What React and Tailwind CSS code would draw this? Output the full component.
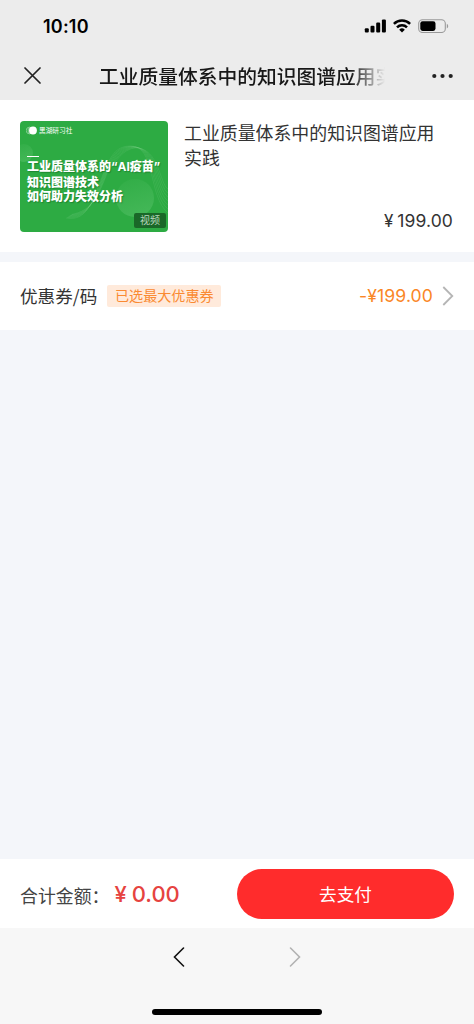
import React from 'react';

const course = {
  title: '工业质量体系中的知识图谱应用实践',
  price: '199.00',
  discount: '199.00',
  total: '0.00',
};

const waves = [0, 1, 2, 3, 4, 5, 6];

const StatusBar = () => (
  <div className="flex h-[52px] items-center justify-between pl-[43px] pr-[25px]">
    <span className="pt-[2px] font-['Inter'] text-[18px] font-semibold leading-none tracking-[0.2px] text-black">10:10</span>
    <div className="flex items-center gap-[7px]">
      <svg width="22" height="14" viewBox="0 0 22 14" fill="#000">
        <rect x="0.8" y="9.2" width="4" height="4.4" rx="1.1" />
        <rect x="6.5" y="6.8" width="4" height="6.8" rx="1.1" />
        <rect x="12.2" y="3.6" width="4" height="10" rx="1.1" />
        <rect x="17.9" y="0.4" width="4" height="13.2" rx="1.1" />
      </svg>
      <svg width="18" height="14" viewBox="0 0 18 14" fill="none" stroke="#000" strokeWidth="2.5">
        <path d="M0.9 4.8a11.6 11.6 0 0 1 16.2 0" />
        <path d="M4 8.3a7.1 7.1 0 0 1 10 0" />
        <path d="M9 13.4 6.2 10.7a4 4 0 0 1 5.6 0Z" fill="#000" stroke="none" />
      </svg>
      <svg width="31" height="14" viewBox="0 0 31 14">
        <rect x="0.7" y="0.7" width="26.6" height="12.8" rx="3.8" fill="none" stroke="#999" strokeWidth="1.1" />
        <rect x="2.3" y="2.3" width="15.2" height="9.6" rx="2.3" fill="#000" />
        <path d="M28.8 4.8c1.9.8 1.9 3.8 0 4.6Z" fill="#999" />
      </svg>
    </div>
  </div>
);

const TitleBar = () => (
  <div className="flex h-[47px] items-center pl-6 pr-[21px]">
    <svg width="17" height="17" viewBox="0 0 17 17" fill="none" stroke="#222" strokeWidth="1.7" strokeLinecap="round">
      <path d="M1 1l15 15M16 1L1 16" />
    </svg>
    <h1 className="ml-[58px] w-[286px] overflow-hidden whitespace-nowrap text-[19.75px] font-medium text-[#181818] [mask-image:linear-gradient(to_right,#000_88%,transparent)]">
      {course.title}
    </h1>
    <svg className="ml-auto" width="21" height="6" viewBox="0 0 21 6" fill="#222">
      <circle cx="2.3" cy="3" r="2.1" />
      <circle cx="10.5" cy="3" r="2.1" />
      <circle cx="18.7" cy="3" r="2.1" />
    </svg>
  </div>
);

const Cover = () => (
  <div className="relative h-[111px] w-[148px] shrink-0 overflow-hidden rounded-[4px] bg-[#2dab43] text-white">
    <svg className="absolute inset-0" width="148" height="111" viewBox="0 0 148 111" fill="none">
      <defs>
        <linearGradient id="ball" x1="0" y1="0" x2="0.3" y2="1">
          <stop offset="0" stopColor="#8ee09a" stopOpacity="0.04" />
          <stop offset="1" stopColor="#8ee09a" stopOpacity="0.22" />
        </linearGradient>
      </defs>
      <circle cx="4" cy="32" r="9" fill="url(#ball)" />
      <circle cx="115" cy="77" r="19" fill="url(#ball)" />
      {waves.map((i) => (
        <path
          key={i}
          d={`M${46 + i} ${97 - i * 0.6}C${66 + i} ${101 - i * 2} ${72 + i} ${82 - i} ${82 + i} ${56 - i}C${90 + i} ${35 + i} ${96 + i} ${25 + i * 0.5} ${110 + i} ${25 + i * 0.3}C${136 + i * 0.5} ${24 + i * 0.5} ${128 + i * 2} ${76 - i * 2} 148 ${92 - i * 4}`}
          stroke="#a4e8aa"
          strokeOpacity="0.2"
          strokeWidth="0.6"
        />
      ))}
    </svg>
    <div className="relative flex h-full flex-col pl-[6px] pt-[4px]">
      <div className="flex h-[11px] items-center gap-[2px]">
        <svg width="11" height="9" viewBox="0 0 11 9" fill="none">
          <circle cx="3.6" cy="4.5" r="3.4" stroke="#fff" strokeOpacity="0.65" strokeWidth="0.6" />
          <circle cx="5.2" cy="4.5" r="3.6" fill="#fff" fillOpacity="0.35" />
          <circle cx="7" cy="4.5" r="3.9" fill="#fff" />
        </svg>
        <span className="text-[6.7px] leading-none">黑湖研习社</span>
      </div>
      <div className="ml-px mt-5 h-px w-3 bg-white" />
      <div className="ml-px mt-[2px] whitespace-nowrap text-[12px] font-black leading-[14.5px] [text-shadow:1px_1px_1px_rgba(0,70,15,0.35)]">
        <p>工业质量体系的<span className="font-['Inter'] font-bold">“AI</span>疫苗<span className="font-['Inter'] font-bold">”</span></p>
        <p>知识图谱技术</p>
        <p>如何助力失效分析</p>
      </div>
    </div>
    <span className="absolute bottom-[4px] right-[2px] flex h-[15px] w-8 items-center justify-center rounded-[2px] bg-[#1a6828] pb-px text-[10px] leading-none text-[#b8d5bc]">
      视频
    </span>
  </div>
);

const ProductCard = () => (
  <section className="flex h-[152px] bg-white pl-5 pr-[21px] pt-[21px]">
    <Cover />
    <div className="ml-4 flex h-[111px] flex-1 flex-col justify-between">
      <h2 className="-mt-px pr-4 text-[17.9px] leading-[25px] text-[#333]">{course.title}</h2>
      <p className="flex items-center justify-end gap-[4px] text-[17.5px] leading-[22px] text-[#333]">
        <span className="font-['Inter'] text-[17px]">¥</span>
        <span className="font-['Inter'] tracking-[0.1px]">{course.price}</span>
      </p>
    </div>
  </section>
);

const CouponRow = () => (
  <section className="mt-[10px] flex h-[68px] items-center bg-white pl-5 pr-5">
    <span className="text-[17.6px] text-[#333]">优惠券/码</span>
    <span className="ml-[10px] flex h-[22px] w-[114px] items-center justify-center rounded-[2px] bg-[#ffeadb] pb-px text-[14.1px] leading-none text-[#fa8a32]">
      已选最大优惠券
    </span>
    <span className="ml-auto pt-px font-['Inter'] text-[17.6px] tracking-[0.1px] text-[#fa8626]">-¥{course.discount}</span>
    <svg className="ml-[9px]" width="12" height="20" viewBox="0 0 12 20" fill="none" stroke="#b5b5b5" strokeWidth="1.8">
      <path d="M1.3 1l9 9-9 9" />
    </svg>
  </section>
);

const PayBar = () => (
  <section className="flex h-[69px] items-center bg-white pl-5 pr-5">
    <span className="mt-[3px] text-[17.9px] text-[#444]">合计金额：</span>
    <p className="ml-[5px] flex items-center gap-[5px] font-['Inter'] text-[22px] font-medium leading-none text-[#e64340]">
      <span>¥</span>
      <span>{course.total}</span>
    </p>
    <button className="ml-auto flex h-[50px] w-[217px] items-center justify-center rounded-full bg-[#ff2c2c] pt-px text-[17.6px] text-white">
      去支付
    </button>
  </section>
);

const BrowserNav = () => (
  <nav className="flex h-24 flex-col items-center bg-[#f7f7f7]">
    <div className="flex h-[58px] items-center gap-[104px]">
      <svg width="12" height="20" viewBox="0 0 12 20" fill="none" stroke="#111" strokeWidth="1.6" strokeLinecap="round">
        <path d="M10.5 1l-9 9 9 9" />
      </svg>
      <svg width="12" height="20" viewBox="0 0 12 20" fill="none" stroke="#b2b2b2" strokeWidth="1.6" strokeLinecap="round">
        <path d="M1.5 1l9 9-9 9" />
      </svg>
    </div>
    <div className="mt-[23px] h-[6px] w-[170px] rounded-full bg-black" />
  </nav>
);

const App = () => (
  <div className="flex h-[1024px] w-[474px] flex-col overflow-hidden bg-[#f4f6fa] font-['Noto_Sans_CJK_SC',sans-serif]">
    <header className="h-[100px] bg-[#ececec]">
      <StatusBar />
      <TitleBar />
    </header>
    <main className="flex-1">
      <ProductCard />
      <CouponRow />
    </main>
    <PayBar />
    <BrowserNav />
  </div>
);

export default App;
